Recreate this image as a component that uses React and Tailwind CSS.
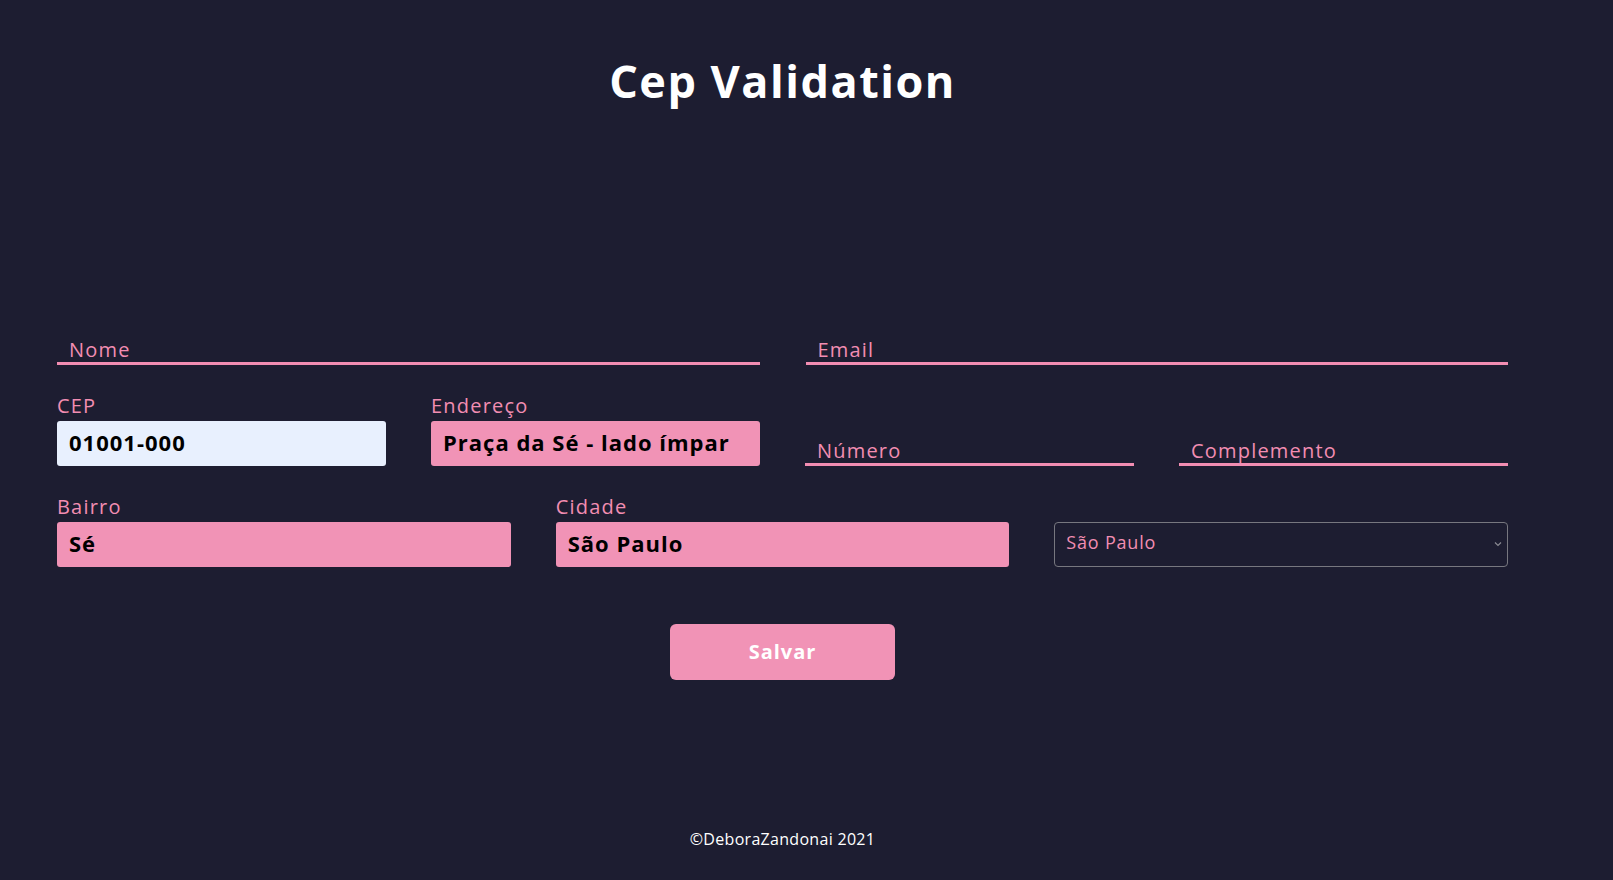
import { useState } from "react";

const FONT = { fontFamily: '"Open Sans", "Noto Sans", sans-serif' };

function LineInput({ placeholder }) {
  return (
    <input
      type="text"
      placeholder={placeholder}
      className="w-full h-[44px] bg-transparent border-b-[3px] border-[#f28db2] pt-[15px] px-[12px] text-[20px] tracking-[1.2px] text-[#f28db2] placeholder:text-[#f28db2] outline-none"
    />
  );
}

function BoxInput({ label, value, filled = true }) {
  return (
    <div className="flex flex-col">
      <label className="h-[30px] leading-[30px] text-[20px] tracking-[1.2px] text-[#f28db2]">{label}</label>
      <input
        type="text"
        defaultValue={value}
        className={`w-full h-[45px] rounded-[3px] px-[12px] pb-[4px] text-[22px] font-bold tracking-[1px] text-black outline-none ${
          filled ? "bg-[#f193b6]" : "bg-[#e8f0fe]"
        }`}
      />
    </div>
  );
}

export default function App() {
  const [uf, setUf] = useState("SP");

  return (
    <div className="min-h-screen bg-[#1d1d31]" style={FONT}>
      <div className="ml-[57px] w-[1451px] flex flex-col">
        <h1 className="mt-[54px] h-[53px] leading-[53px] text-center text-[45px] font-bold tracking-[1.5px] text-white">
          Cep Validation
        </h1>

        <form className="mt-[214px] flex flex-col" onSubmit={(e) => e.preventDefault()}>
          <div className="grid grid-cols-2 gap-x-[46px]">
            <LineInput placeholder="Nome" />
            <LineInput placeholder="Email" />
          </div>

          <div className="mt-[26px] grid grid-cols-4 gap-x-[45px] items-end">
            <BoxInput label="CEP" value="01001-000" filled={false} />
            <BoxInput label="Endereço" value="Praça da Sé - lado ímpar" />
            <LineInput placeholder="Número" />
            <LineInput placeholder="Complemento" />
          </div>

          <div className="mt-[26px] grid grid-cols-3 gap-x-[45px] items-end">
            <BoxInput label="Bairro" value="Sé" />
            <BoxInput label="Cidade" value="São Paulo" />
            <div className="relative">
              <select
                value={uf}
                onChange={(e) => setUf(e.target.value)}
                className="w-full h-[45px] appearance-none rounded-[4px] border border-[#77777f] bg-transparent pl-[11px] pr-[24px] pb-[4px] text-[18px] tracking-[0.8px] text-[#f28db2] outline-none"
              >
                <option value="SP">São Paulo</option>
                <option value="RJ">Rio de Janeiro</option>
                <option value="MG">Minas Gerais</option>
              </select>
              <svg
                className="absolute right-[6px] top-[19px] pointer-events-none"
                width="8"
                height="6"
                viewBox="0 0 8 6"
                fill="none"
              >
                <path d="M1 1.5 L4 4.5 L7 1.5" stroke="#8a8a92" strokeWidth="1.2" />
              </svg>
            </div>
          </div>

          <button
            type="submit"
            className="mt-[57px] mx-auto w-[225px] h-[56px] rounded-[6px] bg-[#f193b6] text-white text-[20px] font-bold tracking-[1px]"
          >
            Salvar
          </button>
        </form>

        <footer className="mt-[147px] h-[24px] leading-[24px] text-center text-[16px] tracking-[0.3px] text-white">
          ©DeboraZandonai 2021
        </footer>
      </div>
    </div>
  );
}
